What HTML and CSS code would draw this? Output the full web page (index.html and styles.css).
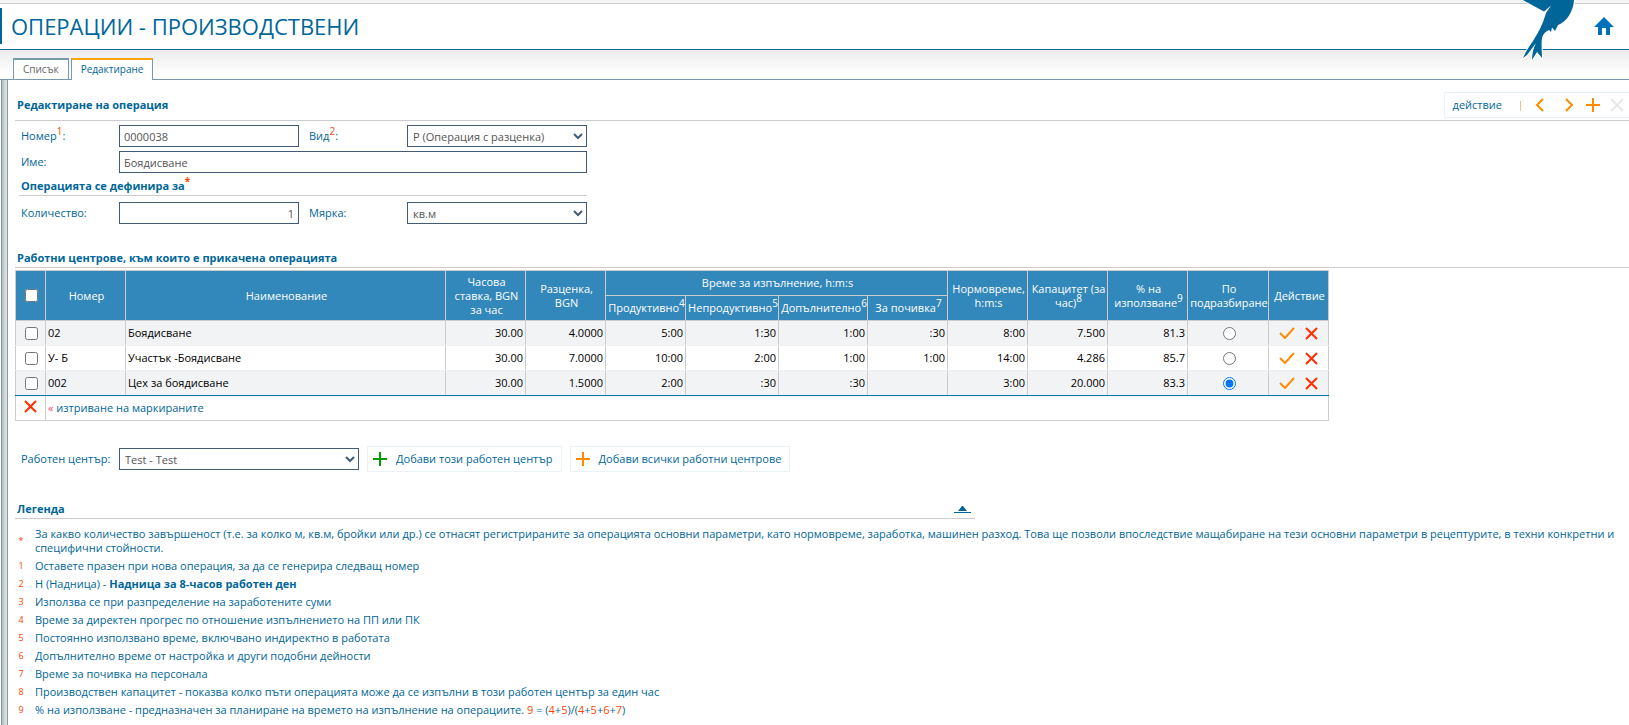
FILE: index.html
```html
<!DOCTYPE html>
<html lang="bg">
<head>
<meta charset="utf-8">
<title>Операции - производствени</title>
<link rel="stylesheet" href="styles.css">
</head>
<body>
<header class="topbar">
  <h1 class="title">ОПЕРАЦИИ - ПРОИЗВОДСТВЕНИ</h1>
  <a class="home" href="#" aria-label="Начало"><svg width="20" height="18" viewBox="0 0 20 18"><path d="M10 0L20 10H16V18H12V11H8V18H4V10H0Z" fill="#0072bc"/></svg></a>
  <svg class="bird" width="70" height="65" viewBox="0 0 70 65" aria-hidden="true"><path d="M6 -1L29 11.500L36 5.500L31 13C28 24 23 33 18 41C14 47 11 51 8 58L12 55L21 43C18 49 17 54 17 60L22 52L27 58C27 52 26 44 27 38C28 34 30 32 34 30L36 32L37 27.500L40 31L43 25C52 22 59 10 59 -1Z" fill="#069" stroke="#fff" stroke-width="2" paint-order="stroke"/></svg>
</header>
<div class="page">
  <aside class="rail"></aside>
  <main class="main">
    <nav class="tabs">
      <a class="tab" href="#">Списък</a>
      <a class="tab tab-active" href="#">Редактиране</a>
    </nav>
    <div class="panel">
      <section>
        <div class="section-head head-tools">
          <h2>Редактиране на операция</h2>
          <div class="toolbar">
            <a href="#">действие</a><i class="sep"></i>
            <button type="button" class="icon prev" aria-label="Предишен"><svg width="14" height="14" viewBox="0 0 14 14"><path d="M10 1L4 7L10 13" class="s-orange"/></svg></button>
            <button type="button" class="icon" aria-label="Следващ"><svg width="14" height="14" viewBox="0 0 14 14"><path d="M4 1L10 7L4 13" class="s-orange"/></svg></button>
            <button type="button" class="icon" aria-label="Нов"><svg width="14" height="14" viewBox="0 0 14 14"><path d="M7 0V14M0 7H14" class="s-orange"/></svg></button>
            <button type="button" class="icon" aria-label="Изтрий" disabled><svg width="14" height="14" viewBox="0 0 14 14"><path d="M1 1L13 13M13 1L1 13" class="s-gray"/></svg></button>
          </div>
        </div>
        <form class="form">
          <label for="num">Номер<sup>1</sup>:</label><input id="num" value="0000038">
          <label for="kind" class="mid">Вид<sup>2</sup>:</label><span class="sel"><select id="kind"><option>Р (Операция с разценка)</option></select><svg width="10" height="7" viewBox="0 0 10 7"><path d="M1 1L5 5L9 1"/></svg></span>
          <label for="name">Име:</label><input id="name" class="wide" value="Боядисване">
          <h3>Операцията се дефинира за<sup>*</sup></h3>
          <label for="qty">Количество:</label><input id="qty" class="right" value="1">
          <label for="unit" class="mid">Мярка:</label><span class="sel"><select id="unit"><option>кв.м</option></select><svg width="10" height="7" viewBox="0 0 10 7"><path d="M1 1L5 5L9 1"/></svg></span>
        </form>
      </section>
      <section class="centres">
        <div class="section-head"><h2>Работни центрове, към които е прикачена операцията</h2></div>
        <table class="grid">
          <colgroup><col class="w30"><col class="w80"><col class="w320"><col class="w80"><col class="w80"><col class="w80"><col class="w93"><col class="w89"><col class="w80"><col class="w80"><col class="w80"><col class="w80"><col class="w81"><col class="w60"></colgroup>
          <thead>
            <tr><th rowspan="2"><input type="checkbox" aria-label="Маркирай всички"></th><th rowspan="2">Номер</th><th rowspan="2">Наименование</th><th rowspan="2">Часова ставка, BGN за час</th><th rowspan="2">Разценка, BGN</th><th colspan="4">Време за изпълнение, h:m:s</th><th rowspan="2">Нормовреме, h:m:s</th><th rowspan="2">Капацитет (за час)<sup>8</sup></th><th rowspan="2">% на използване<sup>9</sup></th><th rowspan="2">По подразбиране</th><th rowspan="2">Действие</th></tr>
            <tr><th>Продуктивно<sup>4</sup></th><th>Непродуктивно<sup>5</sup></th><th>Допълнително<sup>6</sup></th><th>За почивка<sup>7</sup></th></tr>
          </thead>
          <tbody>
            <tr><td class="c"><input type="checkbox" aria-label="02"></td><td>02</td><td>Боядисване</td><td class="n">30.00</td><td class="n">4.0000</td><td class="n">5:00</td><td class="n">1:30</td><td class="n">1:00</td><td class="n">:30</td><td class="n">8:00</td><td class="n">7.500</td><td class="n">81.3</td><td class="c"><input type="radio" name="def" aria-label="02 по подразбиране"></td><td><div class="acts"><button type="button" class="icon" aria-label="Запиши"><svg width="16" height="12" viewBox="0 0 16 12"><path d="M1 6L6 11L15 1" class="s-orange"/></svg></button><button type="button" class="icon" aria-label="Изтрий"><svg width="13" height="13" viewBox="0 0 13 13"><path d="M1 1L12 12M12 1L1 12" class="s-red"/></svg></button></div></td></tr>
            <tr><td class="c"><input type="checkbox" aria-label="У- Б"></td><td>У- Б</td><td>Участък -Боядисване</td><td class="n">30.00</td><td class="n">7.0000</td><td class="n">10:00</td><td class="n">2:00</td><td class="n">1:00</td><td class="n">1:00</td><td class="n">14:00</td><td class="n">4.286</td><td class="n">85.7</td><td class="c"><input type="radio" name="def" aria-label="У- Б по подразбиране"></td><td><div class="acts"><button type="button" class="icon" aria-label="Запиши"><svg width="16" height="12" viewBox="0 0 16 12"><path d="M1 6L6 11L15 1" class="s-orange"/></svg></button><button type="button" class="icon" aria-label="Изтрий"><svg width="13" height="13" viewBox="0 0 13 13"><path d="M1 1L12 12M12 1L1 12" class="s-red"/></svg></button></div></td></tr>
            <tr><td class="c"><input type="checkbox" aria-label="002"></td><td>002</td><td>Цех за боядисване</td><td class="n">30.00</td><td class="n">1.5000</td><td class="n">2:00</td><td class="n">:30</td><td class="n">:30</td><td class="n"></td><td class="n">3:00</td><td class="n">20.000</td><td class="n">83.3</td><td class="c"><input type="radio" name="def" checked aria-label="002 по подразбиране"></td><td><div class="acts"><button type="button" class="icon" aria-label="Запиши"><svg width="16" height="12" viewBox="0 0 16 12"><path d="M1 6L6 11L15 1" class="s-orange"/></svg></button><button type="button" class="icon" aria-label="Изтрий"><svg width="13" height="13" viewBox="0 0 13 13"><path d="M1 1L12 12M12 1L1 12" class="s-red"/></svg></button></div></td></tr>
          </tbody>
          <tfoot>
            <tr><td class="c"><button type="button" class="icon" aria-label="Изтрий маркираните"><svg width="13" height="13" viewBox="0 0 13 13"><path d="M1 1L12 12M12 1L1 12" class="s-red"/></svg></button></td><td colspan="13"><span class="mark">«</span> изтриване на маркираните</td></tr>
          </tfoot>
        </table>
      </section>
      <form class="add">
        <label for="wc">Работен център:</label>
        <span class="sel"><select id="wc"><option>Test - Test</option></select><svg width="10" height="7" viewBox="0 0 10 7"><path d="M1 1L5 5L9 1"/></svg></span>
        <button type="button" class="btn"><svg width="14" height="14" viewBox="0 0 14 14"><path d="M7 0V14M0 7H14" class="s-green"/></svg>Добави този работен център</button>
        <button type="button" class="btn"><svg width="14" height="14" viewBox="0 0 14 14"><path d="M7 0V14M0 7H14" class="s-orange"/></svg>Добави всички работни центрове</button>
      </form>
      <section class="legend">
        <div class="section-head"><h2>Легенда</h2><button type="button" class="icon" aria-label="Скрий легендата"><svg width="17" height="7" viewBox="0 0 17 7"><path d="M8 0H9L13 5H4ZM0 6H17V7H0Z" fill="#069"/></svg></button></div>
        <dl>
          <dt>*</dt><dd>За какво количество завършеност (т.е. за колко м, кв.м, бройки или др.) се отнасят регистрираните за операцията основни параметри, като нормовреме, заработка, машинен разход. Това ще позволи впоследствие мащабиране на тези основни параметри в рецептурите, в техни конкретни и специфични стойности.</dd>
          <dt>1</dt><dd>Оставете празен при нова операция, за да се генерира следващ номер</dd>
          <dt>2</dt><dd>Н (Надница) - <b>Надница за 8-часов работен ден</b></dd>
          <dt>3</dt><dd>Използва се при разпределение на заработените суми</dd>
          <dt>4</dt><dd>Време за директен прогрес по отношение изпълнението на ПП или ПК</dd>
          <dt>5</dt><dd>Постоянно използвано време, включвано индиректно в работата</dd>
          <dt>6</dt><dd>Допълнително време от настройка и други подобни дейности</dd>
          <dt>7</dt><dd>Време за почивка на персонала</dd>
          <dt>8</dt><dd>Производствен капацитет - показва колко пъти операцията може да се изпълни в този работен център за един час</dd>
          <dt>9</dt><dd>% на използване - предназначен за планиране на времето на изпълнение на операциите. <em>9</em> = (<em>4</em>+<em>5</em>)/(<em>4</em>+<em>5</em>+<em>6</em>+<em>7</em>)</dd>
        </dl>
      </section>
    </div>
  </main>
</div>
</body>
</html>
```
FILE: styles.css
```css
* { box-sizing: border-box; }
body {
  margin: 0;
  min-height: 100vh;
  display: flex;
  flex-direction: column;
  background: #fff;
  color: #069;
  font: 11px/14px "Open Sans", "Noto Sans", sans-serif;
}
h1, h2, h3, dl, dd { margin: 0; }
a { color: inherit; text-decoration: none; }
svg { display: block; }
sup { color: #f40; font-size: 10px; line-height: 0; vertical-align: 5px; }
em { color: #f40; font-style: normal; }

.topbar {
  position: relative;
  display: flex;
  align-items: center;
  justify-content: space-between;
  height: 50px;
  padding: 2px 15px 0 0;
  border-bottom: 1px solid #069;
  background: linear-gradient(#f5f5f5 3px, #ccc 3px, #ccc 4px, #fff 4px);
}
.title {
  padding-left: 9px;
  border-left: 2px solid #069;
  font-size: 22px;
  font-weight: 400;
  line-height: 36px;
}
.bird { position: absolute; top: 0; right: 44px; }

.page {
  flex: 1;
  display: flex;
  background: linear-gradient(#ebebeb, #fff 24px);
}
.rail {
  width: 7px;
  margin-top: 29px;
  border-top: 1px solid #79a;
  background: linear-gradient(90deg, #fff 1px, #79a 1px, #79a 2px, #bbb 2px, #e8e8e8 7px);
}
.main { flex: 1; min-width: 0; display: flex; flex-direction: column; padding-top: 8px; }
.tabs { display: flex; gap: 2px; padding-left: 6px; }
.tab {
  height: 21px;
  padding: 1px 9px 0;
  border: 1px solid #79a;
  border-top-width: 2px;
  border-bottom: 0;
  background: #fff;
  font-size: 10px;
  line-height: 16px;
  color: #666;
}
.tab-active { height: 22px; margin-bottom: -1px; border-top-color: #ffa500; color: #069; z-index: 1; }
.panel {
  flex: 1;
  padding: 12px 0 6px 7px;
  border: 1px solid #79a;
  border-width: 1px 0 0 1px;
  background: #fff;
}

.section-head {
  display: flex;
  align-items: center;
  justify-content: space-between;
  padding-left: 2px;
  border-bottom: 1px solid #ccc;
}
h2, h3 { font-size: 11px; font-weight: 700; }
.head-tools h2 { padding-bottom: 2px; }
.toolbar {
  display: flex;
  align-items: center;
  height: 26px;
  margin-bottom: 2px;
  padding: 0 5px 0 8px;
  border: 1px solid #eaf3f8;
  border-right: 0;
  gap: 10px;
}
.prev { margin-right: 5px; }
.sep { width: 1px; height: 10px; margin: 2px 2px 0 8px; background: #ffb98a; }
.icon { padding: 0; border: 0; background: none; }
.s-orange, .s-gray, .s-red, .s-green { fill: none; stroke-width: 2; }
.s-orange { stroke: #ff8c00; }
.s-gray { stroke: #e8e8ea; }
.s-red { stroke: #ff2f00; }
.s-green { stroke: #090; }

.form {
  display: grid;
  grid-template-columns: 98px 180px 108px 180px;
  row-gap: 4px;
  padding: 4px 0 0 6px;
  align-items: center;
}
.mid { padding-left: 10px; }
.wide { grid-column: span 3; }
.right { text-align: right; }
h3 { grid-column: 1 / -1; margin: 2px 0 2px -2px; padding: 0 0 2px 2px; border-bottom: 1px solid #ccc; }
input:not([type]), select {
  width: 100%;
  height: 22px;
  padding: 1px 4px 0;
  border: 1px solid #435a73;
  border-radius: 0;
  background: #fff;
  color: #555;
  font: inherit;
}
select { appearance: none; padding: 1px 5px 0; }
.sel { position: relative; }
.sel svg { position: absolute; top: 8px; right: 4px; fill: none; stroke: #435a73; stroke-width: 2; }

.centres { margin-top: 27px; }
.centres .section-head { padding-bottom: 2px; }
.grid {
  table-layout: fixed;
  width: 1314px;
  margin-top: 2px;
  border-collapse: collapse;
  border: 1px solid #ccc;
  color: #000;
}
.w30 { width: 30px; } .w60 { width: 60px; } .w80 { width: 80px; } .w81 { width: 81px; }
.w89 { width: 89px; } .w93 { width: 93px; } .w320 { width: 320px; }
th, td { height: 25px; padding: 0 2px; border: 1px solid #ccc; }
th { padding: 0 0 0 2px; background: #3287bb; color: #fff; font-weight: 400; }
th sup { color: #fff; }
tbody td { border-top-color: #eee; border-bottom-color: #eee; }
tbody tr:nth-child(odd) { background: #f2f3f5; }
tbody tr:last-child td { border-bottom-color: #0077a8; }
.n { text-align: right; }
.c { text-align: center; }
tbody td.c { padding: 0 0 0 2px; }
.grid input { display: block; width: 13px; height: 13px; margin: 0 auto; }
.acts { display: flex; justify-content: center; gap: 10px; }
.grid tfoot { color: #069; }
.grid tfoot svg { margin: 0 auto; }
.grid tfoot .c { padding: 0; }
.mark { color: #f46; }

.add { display: flex; align-items: center; gap: 8px; margin-top: 25px; padding-left: 6px; }
.add label { width: 90px; white-space: nowrap; }
.add .sel { width: 240px; }
.btn {
  display: flex;
  align-items: center;
  gap: 9px;
  height: 26px;
  padding: 0 8px 0 5px;
  border: 1px solid #eaf3f8;
  background: #fff;
  color: #069;
  font: inherit;
}

.legend { margin-top: 30px; }
.legend .section-head { width: 960px; padding: 0 4px 2px 2px; }
.legend dl {
  display: grid;
  grid-template-columns: 12px 1fr;
  gap: 4px 8px;
  margin-top: 8px;
  padding-right: 8px;
  align-items: center;
}
dt { color: #f40; font-size: 9px; text-align: center; }
```
